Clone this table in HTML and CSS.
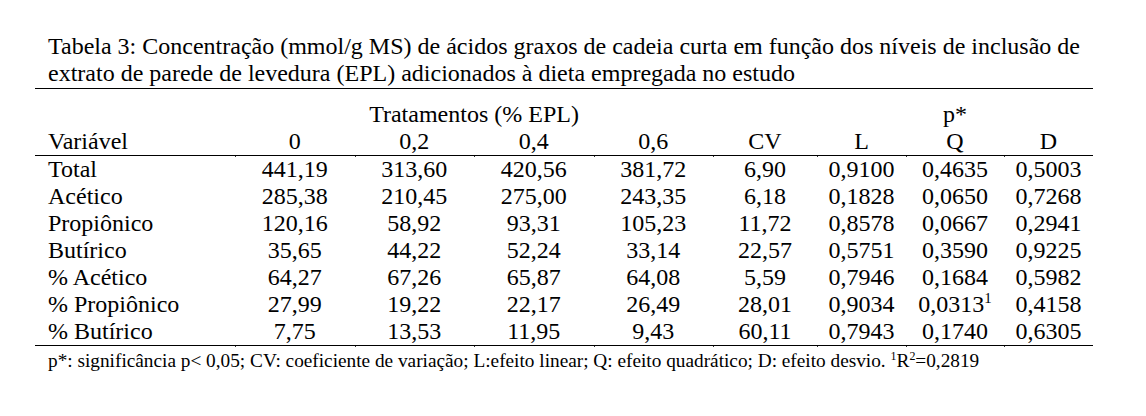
FILE: index.html
```html
<!DOCTYPE html>
<html lang="pt">
<head>
<meta charset="utf-8">
<title>Tabela 3</title>
<link rel="stylesheet" href="styles.css">
</head>
<body>
<div class="page">
  <p class="caption">Tabela 3: Concentração (mmol/g MS) de ácidos graxos de cadeia curta em função dos níveis de inclusão de<br>extrato de parede de levedura (EPL) adicionados à dieta empregada no estudo</p>
  <table class="data">
    <colgroup>
      <col class="c-var"><col class="c-t"><col class="c-t"><col class="c-t"><col class="c-t"><col class="c-cv"><col class="c-l"><col class="c-q"><col class="c-d">
    </colgroup>
    <thead>
      <tr class="h1">
        <th></th>
        <th colspan="4">Tratamentos (% EPL)</th>
        <th></th>
        <th colspan="3">p*</th>
      </tr>
      <tr class="h2">
        <th class="first">Variável</th>
        <th class="tick">0</th><th class="tick">0,2</th><th class="tick">0,4</th><th class="tick">0,6</th><th class="tick">CV</th><th class="tick">L</th><th class="tick">Q</th><th class="tick">D</th>
      </tr>
    </thead>
    <tbody>
      <tr><td class="first">Total</td><td>441,19</td><td>313,60</td><td>420,56</td><td>381,72</td><td>6,90</td><td>0,9100</td><td>0,4635</td><td>0,5003</td></tr>
      <tr><td class="first">Acético</td><td>285,38</td><td>210,45</td><td>275,00</td><td>243,35</td><td>6,18</td><td>0,1828</td><td>0,0650</td><td>0,7268</td></tr>
      <tr><td class="first">Propiônico</td><td>120,16</td><td>58,92</td><td>93,31</td><td>105,23</td><td>11,72</td><td>0,8578</td><td>0,0667</td><td>0,2941</td></tr>
      <tr><td class="first">Butírico</td><td>35,65</td><td>44,22</td><td>52,24</td><td>33,14</td><td>22,57</td><td>0,5751</td><td>0,3590</td><td>0,9225</td></tr>
      <tr><td class="first">% Acético</td><td>64,27</td><td>67,26</td><td>65,87</td><td>64,08</td><td>5,59</td><td>0,7946</td><td>0,1684</td><td>0,5982</td></tr>
      <tr><td class="first">% Propiônico</td><td>27,99</td><td>19,22</td><td>22,17</td><td>26,49</td><td>28,01</td><td>0,9034</td><td>0,0313<sup>1</sup></td><td>0,4158</td></tr>
      <tr class="last"><td class="first">% Butírico</td><td class="tick">7,75</td><td class="tick">13,53</td><td class="tick">11,95</td><td class="tick">9,43</td><td class="tick">60,11</td><td class="tick">0,7943</td><td class="tick">0,1740</td><td class="tick">0,6305</td></tr>
    </tbody>
  </table>
  <p class="note">p*: significância p&lt; 0,05; CV: coeficiente de variação; L:efeito linear; Q: efeito quadrático; D: efeito desvio. <sup>1</sup>R<sup>2</sup>=0,2819</p>
</div>
</body>
</html>
```

FILE: styles.css
```css
html, body {
  margin: 0;
  padding: 0;
  background: #fff;
}

body {
  font-family: "Liberation Serif", "Times New Roman", serif;
  color: #000;
}

.page {
  width: 1058px;
  margin-left: 35px;
  padding-top: 33px;
}

.caption {
  margin: 0 0 1px 0;
  padding-left: 13px;
  font-size: 24px;
  line-height: 27px;
  white-space: nowrap;
}

.data {
  width: 1058px;
  table-layout: fixed;
  border-collapse: separate;
  border-spacing: 0;
  font-size: 24px;
  line-height: 27px;
}

.c-var { width: 200px; }
.c-t { width: 119.5px; }
.c-cv { width: 104px; }
.c-l { width: 89px; }
.c-q { width: 98px; }
.c-d { width: 89px; }

.data th,
.data td {
  padding: 0;
  font-weight: normal;
  text-align: center;
  white-space: nowrap;
  height: 27px;
}

.data .first {
  text-align: left;
  padding-left: 13px;
}

.h1 th {
  border-top: 1px solid #000;
  padding-top: 12px;
}

.h2 th {
  border-bottom: 1px solid #000;
}

.last td {
  border-bottom: 1px solid #000;
}

.data .tick {
  position: relative;
}

.data .tick::before {
  content: "";
  position: absolute;
  left: 0;
  bottom: -2px;
  width: 1px;
  height: 1px;
  background: #333;
}

sup {
  font-size: 62%;
  line-height: 0;
  vertical-align: 0.62em;
}

.note {
  margin: 5px 0 0 0;
  padding-left: 13px;
  font-size: 19.3px;
  line-height: 20px;
  white-space: nowrap;
}
```
